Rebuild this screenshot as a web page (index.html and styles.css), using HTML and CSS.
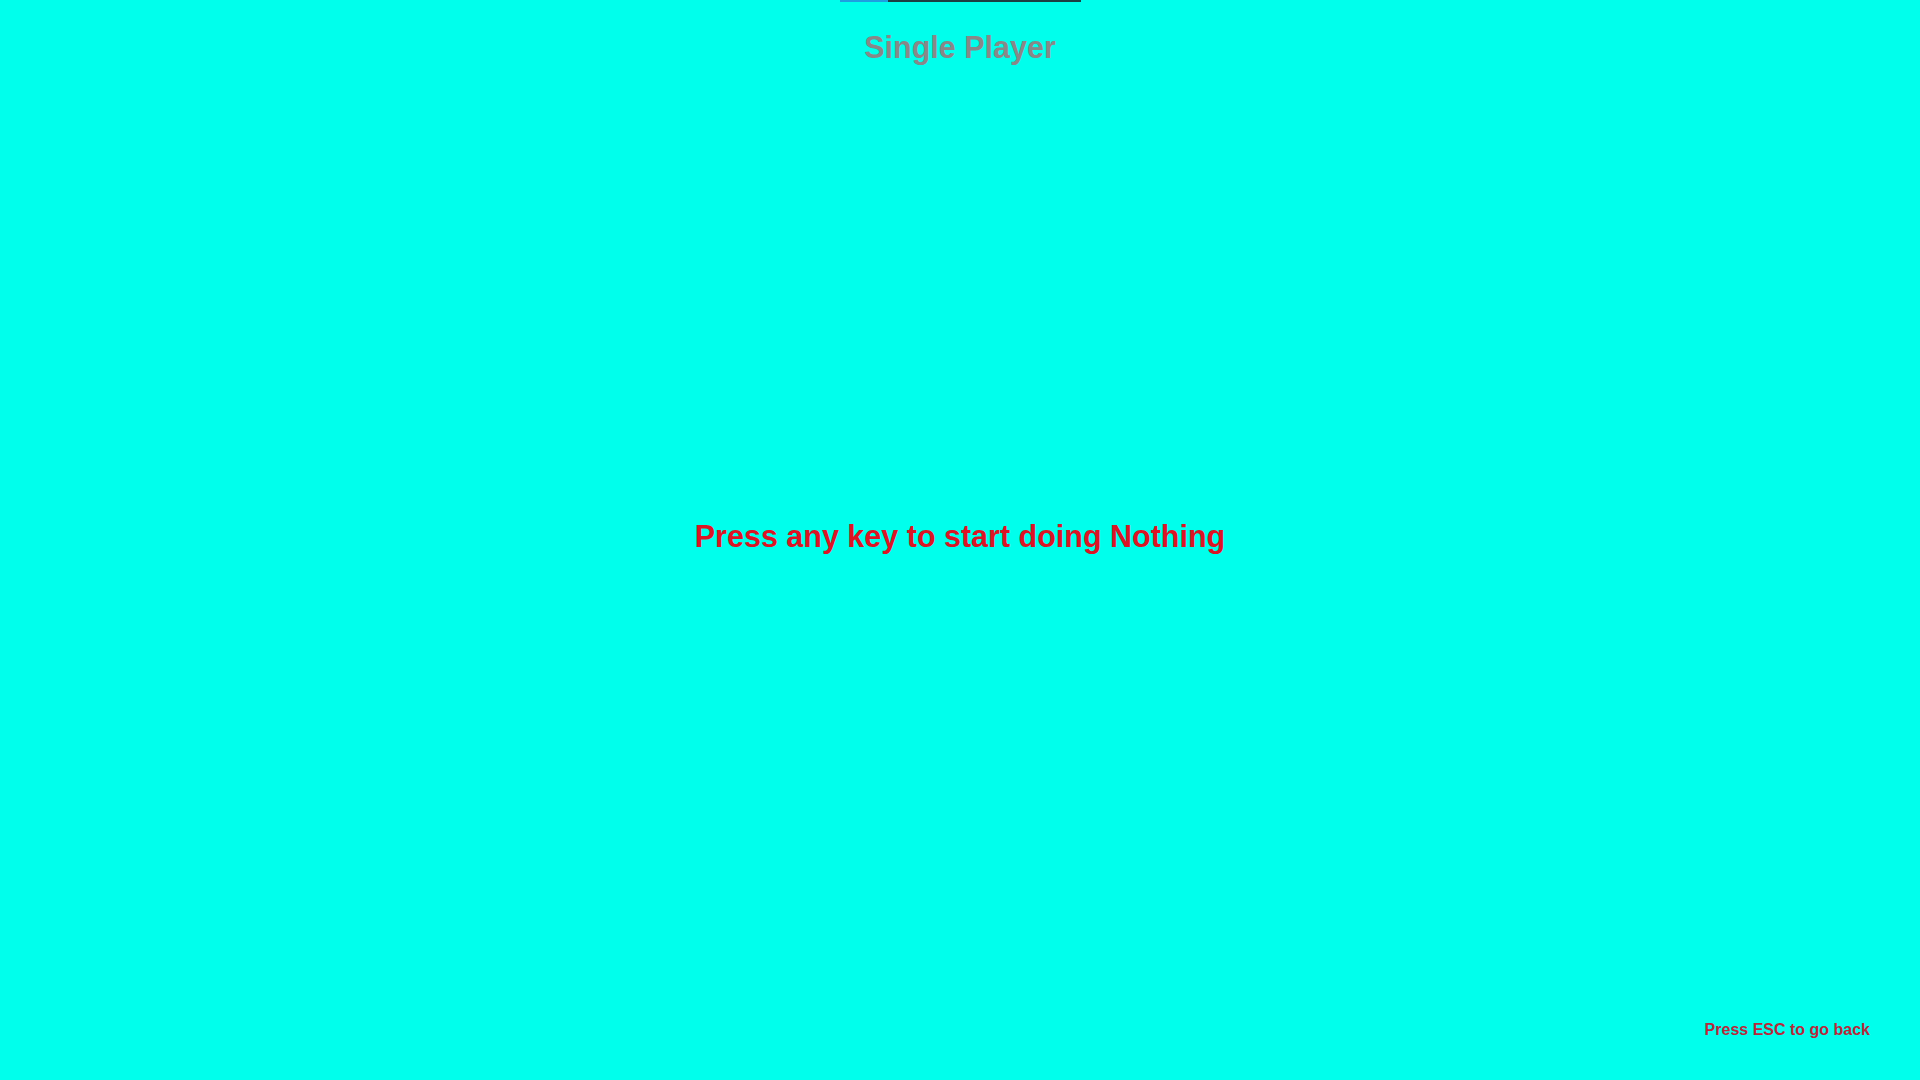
FILE: index.html
```html
<!DOCTYPE html>
<html>
<head>
<meta charset="utf-8">
<title>Single Player</title>
<link rel="stylesheet" href="styles.css">
</head>
<body>
<div class="page">
  <div class="progress"><div class="progress-fill" style="width:20%"></div></div>
  <h1 class="title">Single Player</h1>
  <main class="main">
    <p class="prompt">Press any key to start doing Nothing</p>
  </main>
  <footer class="footer">
    <span class="hint">Press ESC to go back</span>
  </footer>
</div>
</body>
</html>
```
FILE: styles.css
```css
html, body {
  margin: 0;
  padding: 0;
  height: 100%;
}
body {
  background: #00ffec;
  font-family: "Liberation Sans", Arial, Helvetica, sans-serif;
  font-weight: bold;
}
.page {
  display: flex;
  flex-direction: column;
  height: 100vh;
}
.progress {
  align-self: center;
  width: 241px;
  height: 2px;
  background: #1d3f44;
}
.progress-fill {
  height: 100%;
  background: #1f9ee0;
}
.title {
  margin: 28px 0 0;
  text-align: center;
  font-size: 30.5px;
  line-height: 34px;
  color: #888888;
  font-weight: bold;
}
.main {
  flex: 1;
  display: flex;
  align-items: center;
  justify-content: center;
  padding-bottom: 14px;
}
.prompt {
  margin: 0;
  font-size: 30.5px;
  line-height: 34px;
  color: #dc1424;
}
.footer {
  display: flex;
  justify-content: flex-end;
  padding: 0 50px 41px 0;
}
.hint {
  font-size: 16px;
  line-height: 18px;
  color: #b8283a;
}
```
